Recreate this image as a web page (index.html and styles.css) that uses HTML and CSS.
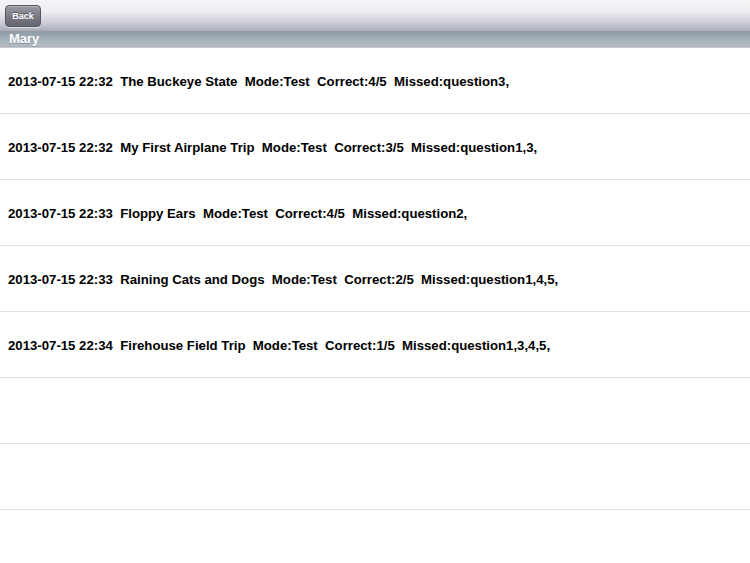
FILE: index.html
```html
<!DOCTYPE html>
<html>
<head>
<meta charset="utf-8">
<link rel="stylesheet" href="styles.css">
</head>
<body>
<div class="toolbar">
  <button class="back">Back</button>
</div>
<div class="section">Mary</div>
<ul class="list">
  <li class="row">2013-07-15 22:32  The Buckeye State  Mode:Test  Correct:4/5  Missed:question3,</li>
  <li class="row">2013-07-15 22:32  My First Airplane Trip  Mode:Test  Correct:3/5  Missed:question1,3,</li>
  <li class="row">2013-07-15 22:33  Floppy Ears  Mode:Test  Correct:4/5  Missed:question2,</li>
  <li class="row">2013-07-15 22:33  Raining Cats and Dogs  Mode:Test  Correct:2/5  Missed:question1,4,5,</li>
  <li class="row">2013-07-15 22:34  Firehouse Field Trip  Mode:Test  Correct:1/5  Missed:question1,3,4,5,</li>
  <li class="row"></li>
  <li class="row"></li>
  <li class="row"></li>
</ul>
</body>
</html>
```
FILE: styles.css
```css
html, body {
  margin: 0;
  padding: 0;
  background: #ffffff;
  font-family: "Liberation Sans", Arial, Helvetica, sans-serif;
}
body {
  width: 750px;
  height: 563px;
  overflow: hidden;
}
.toolbar {
  height: 31px;
  box-sizing: border-box;
  padding: 5px 0 0 5px;
  background: linear-gradient(to bottom, #f5f5f7 0%, #eeeef2 35%, #d0d0da 70%, #abacb9 100%);
}
.back {
  display: block;
  width: 36px;
  height: 22px;
  padding: 0;
  margin: 0;
  border: 1px solid #56575e;
  border-radius: 4px;
  background: linear-gradient(to bottom, #9a9ba2 0%, #7a7b84 50%, #64656e 100%);
  box-shadow: inset 0 1px 0 rgba(255,255,255,0.25), 0 1px 0 rgba(255,255,255,0.5);
  color: #ffffff;
  font-family: "Liberation Sans", Arial, sans-serif;
  font-weight: bold;
  font-size: 9px;
  line-height: 20px;
  text-align: center;
  text-shadow: 0 -1px 0 rgba(0,0,0,0.35);
}
.section {
  height: 16px;
  box-sizing: border-box;
  padding-left: 9px;
  background: linear-gradient(to bottom, #8f9aa6 0%, #a5b0b9 60%, #b3bdc5 100%);
  border-bottom: 1px solid #aeb2b8;
  color: #ffffff;
  font-weight: bold;
  font-size: 13px;
  line-height: 16px;
  text-shadow: 0 1px 0 rgba(90,100,110,0.5);
}
.list {
  list-style: none;
  margin: 0;
  padding: 0;
  border-top: 1px solid #c8ccd0;
}
.row {
  height: 66px;
  box-sizing: border-box;
  border-bottom: 1px solid #e0e0e0;
  padding-left: 8px;
  padding-top: 2px;
  white-space: pre;
  font-weight: bold;
  font-size: 13.2px;
  line-height: 64px;
  color: #000000;
}
```
